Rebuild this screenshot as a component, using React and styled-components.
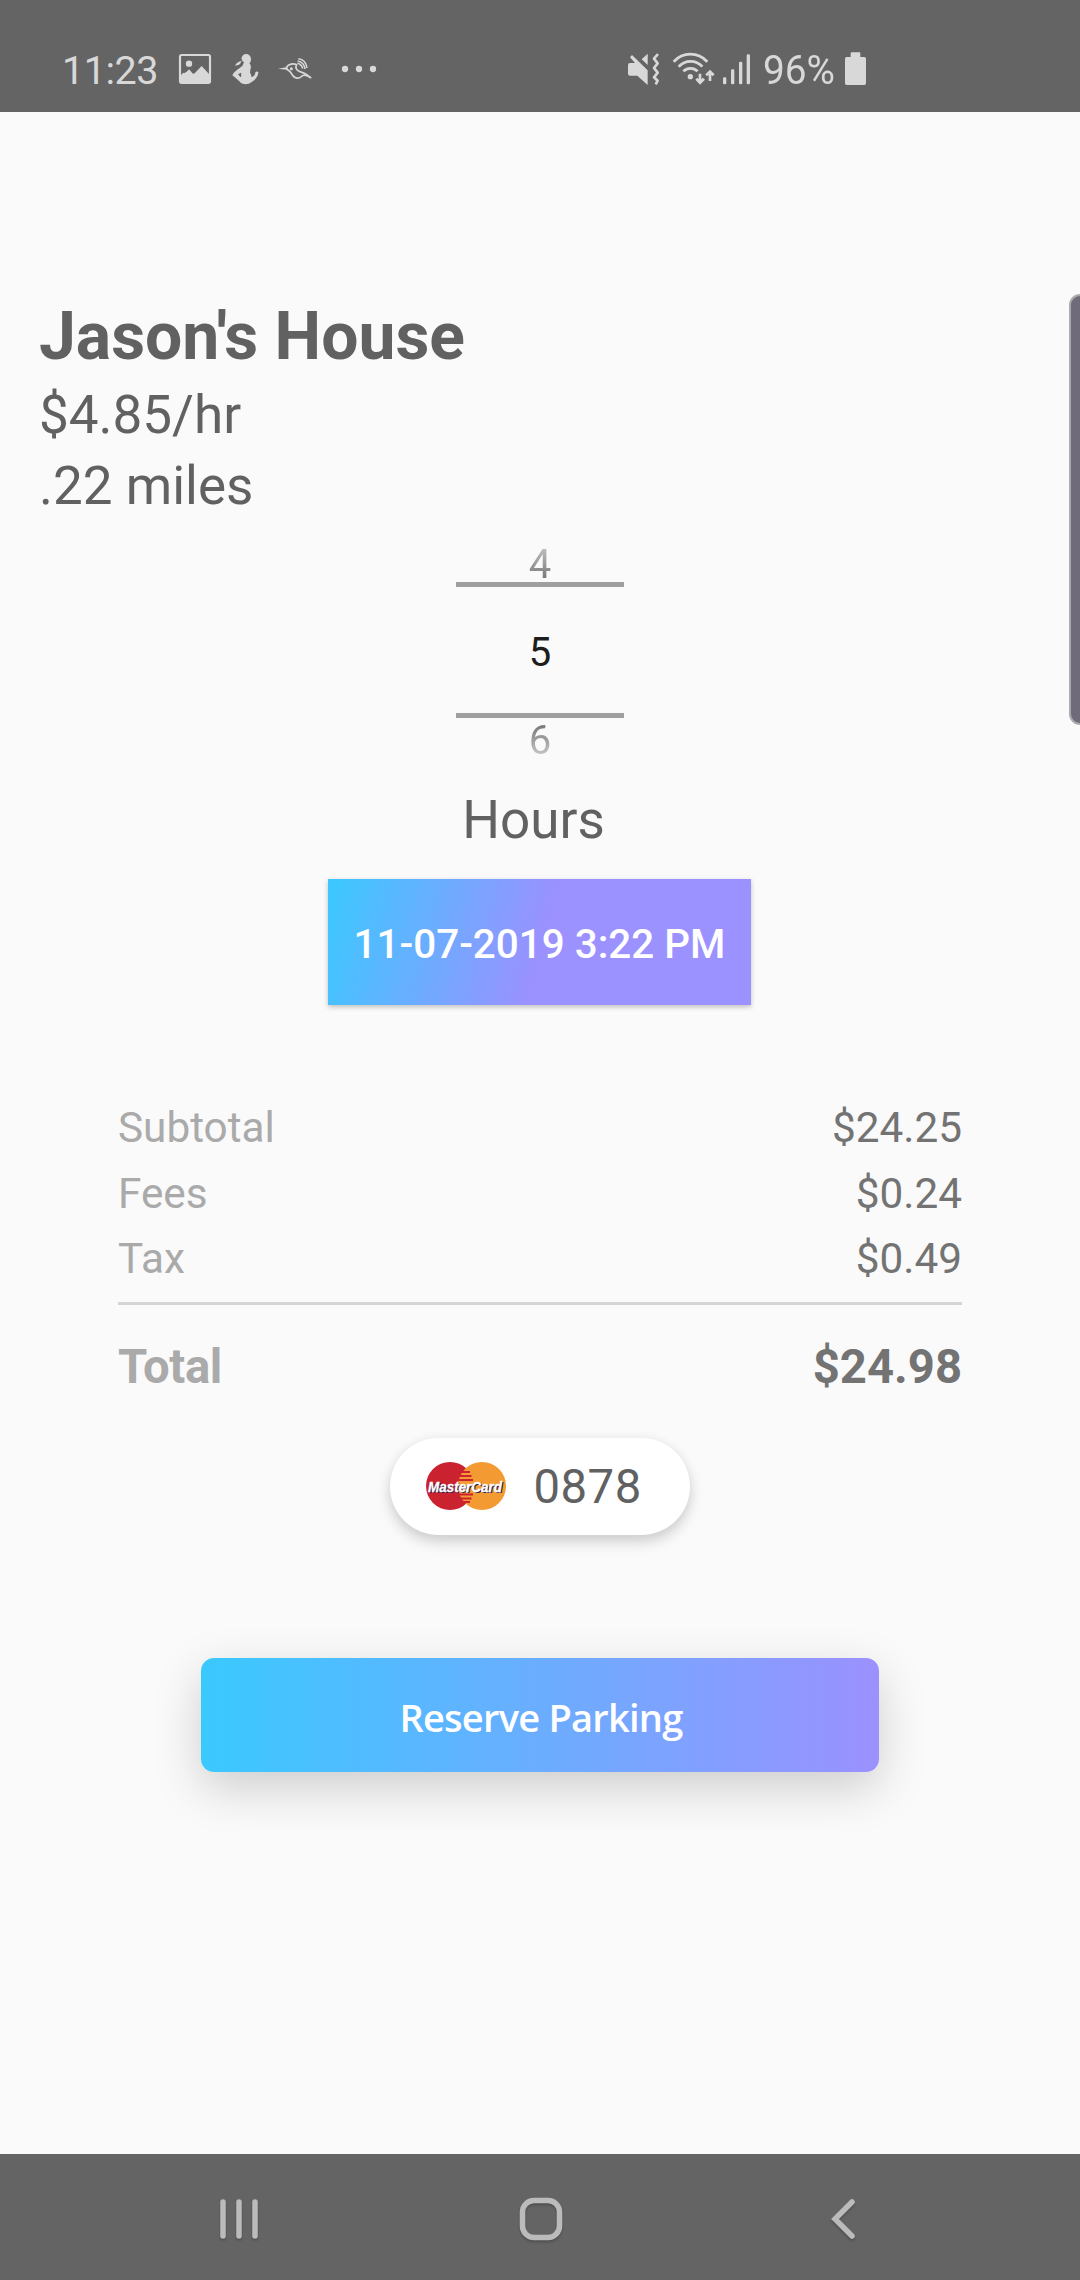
import styled, { createGlobalStyle } from "styled-components";

const GlobalStyle = createGlobalStyle`
  * {
    box-sizing: border-box;
  }

  body {
    margin: 0;
    background: #fafafa;
    font-family: Roboto, sans-serif;
  }
`;

const Screen = styled.div`
  position: relative;
  display: flex;
  flex-direction: column;
  width: 1080px;
  height: 2280px;
  overflow: hidden;
  background: #fafafa;
`;

const StatusBar = styled.header`
  display: flex;
  justify-content: space-between;
  height: 112px;
  padding: 26px 214px 0 62px;
  background: #646464;
  color: #d8d8d8;
`;

const StatusGroup = styled.div`
  display: flex;
  align-items: center;
  height: 86px;
`;

const StatusIcon = styled.svg`
  flex: none;
  width: ${(props) => props.$width}px;
  height: 34px;
  margin-left: ${(props) => props.$gap || 0}px;
  overflow: visible;
  fill: currentColor;
`;

const Clock = styled.span`
  width: 96px;
  padding-top: 3px;
  font-size: 39.5px;
  letter-spacing: -0.5px;
  line-height: 86px;
  white-space: nowrap;
`;

const BatteryLevel = styled.span`
  width: 75px;
  margin-left: 13px;
  padding-top: 3px;
  font-size: 40px;
  line-height: 86px;
  white-space: nowrap;
  transform: scaleX(0.97);
  transform-origin: left;
`;

const Content = styled.main`
  display: flex;
  flex: 1;
  flex-direction: column;
  align-items: center;
  padding-top: 185px;
`;

const SpotInfo = styled.section`
  align-self: stretch;
  padding-left: 39px;
  color: #616161;
`;

const SpotName = styled.h1`
  margin: 0 0 3px;
  font-size: 66px;
  font-weight: 700;
  line-height: 80px;
`;

const SpotDetail = styled.p`
  margin: 0;
  font-size: 53px;
  line-height: 71px;
`;

const HourPicker = styled.div`
  width: 168px;
  font-size: 40px;
  text-align: center;
`;

const HourOption = styled.div`
  height: ${(props) => (props.$next ? 45 : 60)}px;
  padding-top: ${(props) => (props.$next ? 0 : 25)}px;
  line-height: ${(props) => (props.$next ? 45 : 36)}px;
  color: transparent;
  background: ${(props) =>
    props.$next
      ? "linear-gradient(to top, #c6c6c6 18%, #787878 85%)"
      : "linear-gradient(to bottom, #c0c0c0 42%, #787878 95%)"};
  background-clip: text;
`;

const SelectedHour = styled.div`
  height: 136px;
  padding-top: 5px;
  border-top: 5px solid #9f9f9f;
  border-bottom: 5px solid #9f9f9f;
  line-height: 122px;
  color: #1d1d1d;
`;

const HoursLabel = styled.div`
  margin: 26px 13px 27px 0;
  font-size: 53px;
  line-height: 63px;
  color: #616161;
`;

const DateButton = styled.button`
  width: 423px;
  height: 126px;
  margin-right: 1px;
  padding: 4px 0 0;
  border: 0;
  background: linear-gradient(105deg, #3ac9ff 0%, #9b91ff 51%);
  box-shadow: 0 2px 5px rgba(0, 0, 0, 0.24);
  color: #fff;
  font-family: inherit;
  font-size: 40.4px;
  font-weight: 500;
  white-space: nowrap;
`;

const Summary = styled.section`
  width: 844px;
  margin: 90px 0 41px;
`;

const SummaryRow = styled.div`
  display: flex;
  justify-content: space-between;
  font-size: 42.3px;
  line-height: 65.5px;
  color: #aaa;
`;

const Amount = styled.span`
  color: #737373;
`;

const TotalRow = styled(SummaryRow)`
  margin-top: 10px;
  padding-top: 32px;
  border-top: 3px solid #d5d5d5;
  font-size: 47.25px;
  font-weight: 700;
  line-height: 60px;
`;

const TotalLabel = styled.span`
  letter-spacing: -0.35px;
`;

const CardPill = styled.div`
  display: flex;
  align-items: center;
  width: 300px;
  height: 97px;
  margin-right: 1px;
  padding-left: 35px;
  border-radius: 49px;
  background: #fff;
  box-shadow: 0 7px 14px rgba(0, 0, 0, 0.17), 0 0 12px rgba(0, 0, 0, 0.04);
`;

const CardLogo = styled.svg`
  width: 82px;
  height: 50px;
  overflow: visible;
`;

const CardDigits = styled.span`
  margin-left: 27px;
  padding-top: 2px;
  font-size: 47.25px;
  letter-spacing: 0.5px;
  color: #616161;
`;

const ReserveButton = styled.button`
  width: 678px;
  height: 114px;
  margin-top: 123px;
  padding: 4px 0 0 2px;
  border: 0;
  border-radius: 13px;
  background: linear-gradient(90deg, #3ac9ff, #9b91ff);
  box-shadow: 0 16px 48px rgba(0, 0, 0, 0.18);
  color: #fff;
  font-family: "Open Sans", sans-serif;
  font-size: 38px;
  font-weight: 600;
  letter-spacing: -0.75px;
`;

const EdgePanel = styled.div`
  position: absolute;
  top: 294px;
  right: 0;
  width: 11px;
  height: 431px;
  border: 2px solid #a9aaad;
  border-right: 0;
  border-radius: 14px 0 0 14px;
  background: #6f6b7b;
`;

const NavBar = styled.nav`
  display: flex;
  height: 126px;
  padding: 42px 0 0 218px;
  background: #646464;
`;

const NavIcon = styled.svg`
  width: ${(props) => props.$width}px;
  height: 46px;
  margin-left: ${(props) => props.$gap || 0}px;
  overflow: visible;
  fill: none;
  stroke: #bbb;
  stroke-width: 5.5;
  stroke-linecap: round;
  filter: drop-shadow(0 2px 1px rgba(0, 0, 0, 0.2));
`;

const charges = [
  { label: "Subtotal", amount: "$24.25" },
  { label: "Fees", amount: "$0.24" },
  { label: "Tax", amount: "$0.49" },
];

function PictureIcon() {
  return (
    <StatusIcon $width={32} $gap={21} viewBox="0 0 96 102">
      <rect x="3" y="9" width="90" height="84" rx="5" fill="none" stroke="currentColor" strokeWidth="6.5" />
      <circle cx="30" cy="35" r="9.5" />
      <path d="M6 69 L13 62 Q17 67 30 52 L42 65 Q44 66 47 64 L68 42 L90 66 V92 H6 Z" />
    </StatusIcon>
  );
}

function ParentIcon() {
  return (
    <StatusIcon $width={27} $gap={21} viewBox="0 0 81 102">
      <path d="M42 6 C51 6 57 13 57 22 C57 28 55 32 52 34 C57 39 58 45 55 53 L54 62 C58 67 58 72 59 76 C67 72 70 68 70 61 Q74 56 79 60 C79 73 70 83 58 91 C50 98 34 98 27 93 C21 86 7 75 1 70 C6 58 20 51 31 42 L36 31 C30 27 28 22 29 17 C31 10 36 6 42 6 Z M18 67 L26 76 Q29 70 27 62 Z" fillRule="evenodd" />
      <path d="M29 26 C20 28 13 32 9 41 C19 40 25 38 27 30 Z" />
    </StatusIcon>
  );
}

function BirdIcon() {
  return (
    <StatusIcon $width={34} $gap={19} viewBox="0 0 102 102">
      <path d="M0 50 L28 45 L31 54 Z" />
      <g fill="none" stroke="currentColor" strokeWidth="5">
        <path d="M25 46 C32 35 46 34 56 38 C52 45 53 54 66 59 C77 62 86 65 98 77 C88 71 77 67 72 72 C64 82 49 80 43 69 C39 61 36 56 26 52" strokeLinejoin="round" />
        <path d="M58 34 C67 36 72 41 74 50 M59 27 C72 29 79 37 81 51 M61 20 C77 22 85 33 87 48" strokeWidth="4.5" />
      </g>
      <circle cx="40" cy="50" r="4.5" />
    </StatusIcon>
  );
}

function MoreDots() {
  return (
    <StatusIcon $width={34} $gap={30} viewBox="0 0 102 102">
      <circle cx="9" cy="51" r="9.5" />
      <circle cx="51" cy="51" r="9.5" />
      <circle cx="93" cy="51" r="9.5" />
    </StatusIcon>
  );
}

function VibrateIcon() {
  return (
    <StatusIcon $width={31} viewBox="0 0 93 102">
      <path d="M12 9 L59 55 V97 L58 98 L28 71 H6 Q0 71 0 65 V39 Q0 33 6 33 H21 L6 16 Z" />
      <path d="M59 5 V39 L41 22 Z" />
      <path d="M90 6 L78 20 L89 34 L78 48 L89 62 L78 76 L89 86 L83 97" fill="none" stroke="currentColor" strokeWidth="8" strokeLinejoin="round" />
    </StatusIcon>
  );
}

function WifiIcon() {
  return (
    <StatusIcon $width={42} $gap={14} viewBox="0 0 126 102">
      <g fill="none" stroke="currentColor" strokeWidth="8.5">
        <path d="M2 29 C30 -1 74 -1 103 29" />
        <path d="M17 44 C37 23 69 23 88 44" />
        <path d="M31 58 C43 46 62 46 74 58" />
      </g>
      <circle cx="52" cy="74" r="8" />
      <path d="M77 65 H85 V82 L90 77 L96 83 L81 98 L67 83 L73 77 L77 82 Z" />
      <path d="M107 87 H115 V69 L119 73 L125 67 L111 53 L97 67 L102 73 L107 69 Z" />
    </StatusIcon>
  );
}

function SignalIcon() {
  return (
    <StatusIcon $width={27} $gap={8} viewBox="0 0 81 102">
      <rect x="0" y="76" width="10" height="21" rx="4" />
      <rect x="24" y="52" width="10" height="45" rx="4" />
      <rect x="48" y="29" width="10" height="68" rx="4" />
      <rect x="71" y="7" width="10" height="90" rx="4" />
    </StatusIcon>
  );
}

function BatteryIcon() {
  return (
    <StatusIcon $width={21} $gap={7} viewBox="0 0 63 102">
      <path d="M20 1 H43 Q46 1 46 4 V15 H58 Q63 15 63 20 V94 Q63 99 58 99 H5 Q0 99 0 94 V20 Q0 15 5 15 H17 V4 Q17 1 20 1 Z" />
    </StatusIcon>
  );
}

function MasterCardLogo() {
  return (
    <CardLogo viewBox="0 0 82 50">
      <circle cx="25" cy="25" r="24" fill="#cb2230" />
      <circle cx="57" cy="25" r="24" fill="#f49a33" />
      <path
        d="M36 11H45M34.500 15H46.500M33.500 19H48M33.500 33.500H48M34.500 37.500H46.500M36 41H45"
        stroke="#cb2230"
        strokeWidth="2"
      />
      <g fontFamily="Liberation Sans, sans-serif" fontSize="15.500" fontWeight="700" fontStyle="italic">
        <text x="4.200" y="31.500" textLength="74" lengthAdjust="spacingAndGlyphs" fill="#2c2452">
          MasterCard
        </text>
        <text x="3" y="30.500" textLength="74" lengthAdjust="spacingAndGlyphs" fill="#fff" stroke="#fff" strokeWidth="0.300" aria-hidden="true">
          MasterCard
        </text>
      </g>
    </CardLogo>
  );
}

export default function App() {
  return (
    <>
      <GlobalStyle />
      <Screen>
        <StatusBar>
          <StatusGroup>
            <Clock>11:23</Clock>
            <PictureIcon />
            <ParentIcon />
            <BirdIcon />
            <MoreDots />
          </StatusGroup>
          <StatusGroup>
            <VibrateIcon />
            <WifiIcon />
            <SignalIcon />
            <BatteryLevel>96%</BatteryLevel>
            <BatteryIcon />
          </StatusGroup>
        </StatusBar>

        <Content>
          <SpotInfo>
            <SpotName>Jason's House</SpotName>
            <SpotDetail>$4.85/hr</SpotDetail>
            <SpotDetail>.22 miles</SpotDetail>
          </SpotInfo>

          <HourPicker>
            <HourOption>4</HourOption>
            <SelectedHour>5</SelectedHour>
            <HourOption $next>6</HourOption>
          </HourPicker>
          <HoursLabel>Hours</HoursLabel>
          <DateButton>11-07-2019 3:22 PM</DateButton>

          <Summary>
            {charges.map((charge) => (
              <SummaryRow key={charge.label}>
                <span>{charge.label}</span>
                <Amount>{charge.amount}</Amount>
              </SummaryRow>
            ))}
            <TotalRow>
              <TotalLabel>Total</TotalLabel>
              <Amount>$24.98</Amount>
            </TotalRow>
          </Summary>

          <CardPill>
            <MasterCardLogo />
            <CardDigits>0878</CardDigits>
          </CardPill>
          <ReserveButton>Reserve Parking</ReserveButton>
        </Content>

        <NavBar>
          {/* Recents, home, back */}
          <NavIcon $width={42} viewBox="0 0 42 46">
            <path d="M5 6V40M21 6V40M37 6V40" />
          </NavIcon>
          <NavIcon $width={46} $gap={258} viewBox="0 0 46 46">
            <rect x="4.500" y="4.500" width="37" height="37" rx="11.500" />
          </NavIcon>
          <NavIcon $width={28} $gap={264} viewBox="0 0 28 46">
            <path d="M24 6L7 23L24 40" />
          </NavIcon>
        </NavBar>
        <EdgePanel />
      </Screen>
    </>
  );
}
